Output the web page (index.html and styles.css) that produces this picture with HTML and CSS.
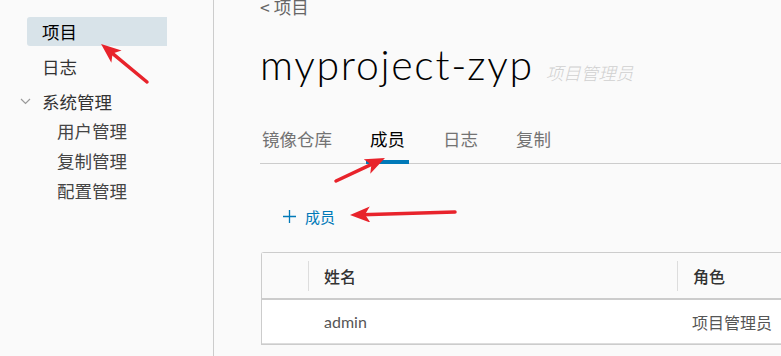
FILE: index.html
```html
<!DOCTYPE html>
<html>
<head>
    <title>myproject-zyp - 成员</title>
    <link rel="stylesheet" href="styles.css">
</head>
<body>
    <div class="app">
        <div class="sidebar">
            <a class="nav-link active">项目</a>
            <a class="nav-link">日志</a>
            <div class="nav-group">
                <svg class="chevron" width="11" height="7" viewBox="0 0 11 7"><path d="M1 1 L5.5 5.5 L10 1" fill="none" stroke="#9a9a9a" stroke-width="1.2"/></svg>
                <span>系统管理</span>
            </div>
            <a class="nav-link sub">用户管理</a>
            <a class="nav-link sub">复制管理</a>
            <a class="nav-link sub">配置管理</a>
        </div>
        <div class="content">
            <div class="breadcrumb">&lt; 项目</div>
            <h1 class="title">myproject-zyp<span class="role">项目管理员</span></h1>
            <div class="tabs">
                <div class="tab first">镜像仓库</div>
                <div class="tab active">成员</div>
                <div class="tab">日志</div>
                <div class="tab">复制</div>
            </div>
            <div class="add-member">
                <svg width="13" height="13" viewBox="0 0 13 13"><path d="M6.5 0 V13 M0 6.5 H13" stroke="#0079b8" stroke-width="1.3"/></svg>
                <span>成员</span>
            </div>
            <div class="datagrid">
                <div class="row head">
                    <div class="cell select"></div>
                    <div class="cell name">姓名</div>
                    <div class="cell role-col">角色</div>
                </div>
                <div class="row">
                    <div class="cell select"></div>
                    <div class="cell name latin">admin</div>
                    <div class="cell role-col">项目管理员</div>
                </div>
            </div>
        </div>
    </div>
    <!-- annotation arrows drawn over the screenshot -->
    <svg class="arrows" width="781" height="356">
        <defs>
            <marker id="head" markerUnits="userSpaceOnUse" markerWidth="20" markerHeight="16" viewBox="0 0 20 16" refX="8" refY="8" orient="auto">
                <path d="M0 0 L20 8 L0 16 L5 8 Z" fill="#e8232b"/>
            </marker>
        </defs>
        <line x1="147" y1="82" x2="110.3" y2="51.6" stroke="#e8232b" stroke-width="3.5" stroke-linecap="round" marker-end="url(#head)"/>
        <line x1="336" y1="181" x2="374.1" y2="163.1" stroke="#e8232b" stroke-width="3.5" stroke-linecap="round" marker-end="url(#head)"/>
        <line x1="455" y1="212" x2="362" y2="214.7" stroke="#e8232b" stroke-width="3.5" stroke-linecap="round" marker-end="url(#head)"/>
    </svg>
</body>
</html>
```

FILE: styles.css
```css
body {
    margin: 0;
    background-color: #fafafa;
    font-family: "Noto Sans CJK SC", sans-serif;
    overflow: hidden;
}

.app {
    display: flex;
    height: 356px;
}

.sidebar {
    width: 186px;
    flex-shrink: 0;
    border-right: 1px solid #ccc;
    padding: 17px 0 0 27px;
    display: flex;
    flex-direction: column;
}

.nav-link {
    display: block;
    width: 125px;
    height: 29px;
    line-height: 29px;
    padding-left: 15px;
    margin-bottom: 6px;
    font-size: 17.5px;
    color: #333;
    border-radius: 3px 0 0 3px;
}

.nav-link.active {
    background-color: #d8e3e9;
    color: #000;
}

.nav-link.sub {
    height: 30px;
    line-height: 30px;
    padding-left: 30px;
    margin-bottom: 0;
    color: #454545;
}

.nav-group {
    display: flex;
    align-items: center;
    height: 29px;
    font-size: 17.5px;
    color: #333;
}

.chevron {
    margin-left: -7px;
    margin-right: 11px;
}

.content {
    flex: 1;
    padding-left: 46px;
    min-width: 0;
}

.breadcrumb {
    font-size: 17.5px;
    line-height: 14px;
    color: #666;
}

.title {
    margin: 27px 0 0 0;
    height: 48px;
    font-family: Lato, sans-serif;
    font-weight: 300;
    font-size: 41px;
    line-height: 48px;
    color: #000;
    letter-spacing: 1.7px;
    white-space: nowrap;
}

.title .role {
    font-family: "Noto Sans CJK SC", sans-serif;
    font-style: italic;
    font-size: 17.5px;
    line-height: 1;
    color: #d0d0d0;
    margin-left: 12px;
    letter-spacing: 0;
}

.tabs {
    display: flex;
    margin-top: 35px;
    border-bottom: 1px solid #ccc;
}

.tab {
    padding: 0 4px 6px 4px;
    margin-right: 30px;
    line-height: 30px;
    font-size: 17.5px;
    color: #737373;
    border-bottom: 4px solid transparent;
    margin-bottom: -1px;
}

.tab.first {
    padding-left: 2px;
}

.tab.active {
    color: #000;
    border-bottom-color: #0079b8;
}

.add-member {
    display: flex;
    align-items: center;
    height: 30px;
    margin: 37px 0 0 23px;
    color: #0079b8;
    font-size: 15px;
}

.add-member span {
    margin-left: 9px;
}

.datagrid {
    margin: 21px 0 0 1px;
    width: 640px;
    border: 1px solid #ccc;
    border-right: none;
    border-radius: 3px 0 0 0;
}

.row {
    display: flex;
    height: 43px;
    align-items: center;
    background-color: #fff;
    border-bottom: 1px solid #ddd;
    font-size: 16px;
    color: #565656;
}

.row.head {
    height: 45px;
    background-color: #fafafa;
    border-bottom: 2px solid #ccc;
    color: #333;
    font-weight: 500;
}

.cell {
    height: 30px;
    line-height: 30px;
    padding-left: 15px;
}

.row.head .cell.name,
.row.head .cell.role-col {
    border-left: 1px solid #ddd;
}

.row .cell.name {
    border-left: 1px solid transparent;
}

.cell.select {
    width: 46px;
    padding: 0;
}

.cell.name {
    width: 353px;
}

.cell.latin {
    font-family: Lato, sans-serif;
}

.arrows {
    position: absolute;
    left: 0;
    top: 0;
    pointer-events: none;
}
```
